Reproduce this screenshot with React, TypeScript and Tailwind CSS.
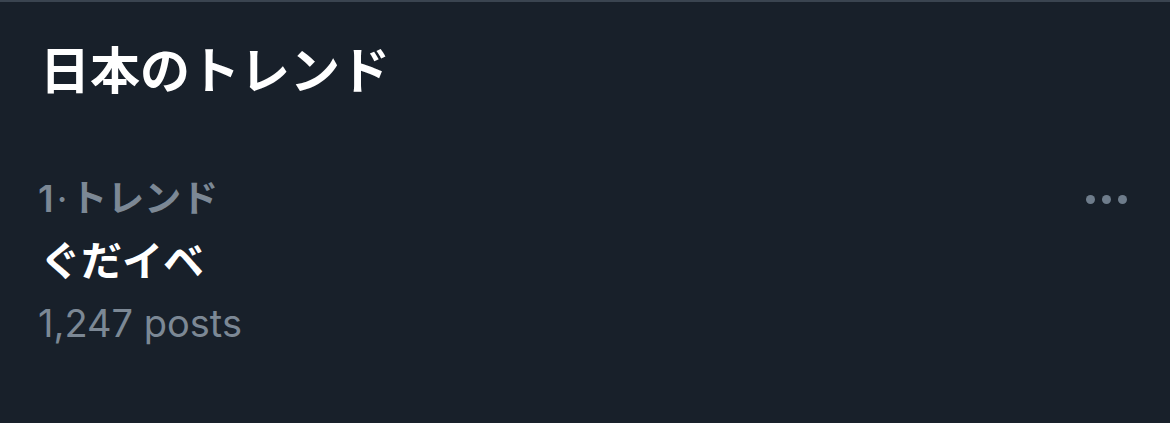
const jp = { fontFamily: 'Inter, "Noto Sans CJK JP", sans-serif' }

const TrendItem = ({ rank, category, name, posts }) => {
  return (
    <div className="flex items-start justify-between pl-[38px] pr-[43px]">
      <div className="flex flex-col">
        <p className="text-[37px] leading-[48px] font-semibold text-[#7c8895]">
          {rank}
          <span className="mx-[3px] font-normal">·</span>
          {category}
        </p>
        <p className="text-[41px] leading-[76px] font-bold text-white pl-[2px]">
          {name}
        </p>
        <p className="text-[38px] leading-[48px] text-[#7c8895]">{posts}</p>
      </div>
      <div className="flex gap-[7px] mt-[20px]">
        <span className="w-[9px] h-[9px] rounded-full bg-[#6e7c8b]" />
        <span className="w-[9px] h-[9px] rounded-full bg-[#6e7c8b]" />
        <span className="w-[9px] h-[9px] rounded-full bg-[#6e7c8b]" />
      </div>
    </div>
  )
}

export default function App() {
  return (
    <div
      className="w-[1170px] h-[423px] bg-[#18202a] border-t-2 border-[#3a4450]"
      style={jp}
    >
      <h2 className="pl-[40px] pt-[36px] text-[50px] leading-[66px] font-bold text-white">
        日本のトレンド
      </h2>
      <div className="mt-[71px]">
        <TrendItem rank="1" category="トレンド" name="ぐだイベ" posts="1,247 posts" />
      </div>
    </div>
  )
}
